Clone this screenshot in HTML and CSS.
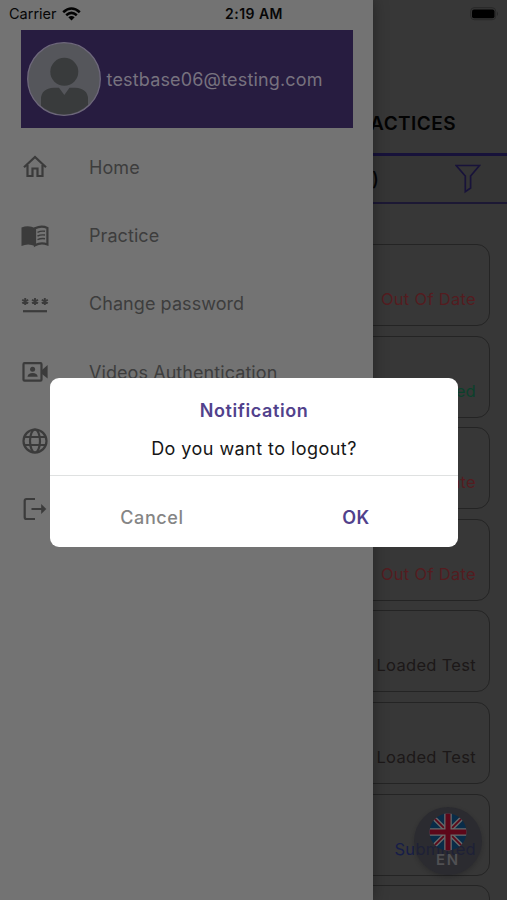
FILE: index.html
```html
<!DOCTYPE html>
<html lang="en">
<head>
<meta charset="utf-8">
<title>Practices</title>
<link rel="stylesheet" href="styles.css">
</head>
<body>
<div class="app">
  <main class="page">
    <h1 class="page-title">PRACTICES</h1>
    <div class="filter-bar">
      <span class="count">)</span>
      <svg class="funnel" width="26" height="30" viewBox="0 0 26 30"><path d="M1.2 1.5H24.5L15.6 12V24L10.3 27.6V12Z"/></svg>
    </div>
    <div class="cards">
      <div class="card late">Out Of Date</div>
      <div class="card done">Submitted</div>
      <div class="card late">Out Of Date</div>
      <div class="card late">Out Of Date</div>
      <div class="card">Loaded Test</div>
      <div class="card">Loaded Test</div>
      <div class="card sent">Submitted</div>
      <div class="card"></div>
    </div>
  </main>

  <div class="language">
    <svg width="38" height="38" viewBox="0 0 38 38">
      <defs><clipPath id="disc"><circle cx="19" cy="19" r="18.5"/></clipPath></defs>
      <g clip-path="url(#disc)">
        <path fill="#092c48" d="M0 0H38V38H0Z"/>
        <path stroke="#696969" stroke-width="4.6" d="M0 0L38 38M38 0L0 38"/>
        <path stroke="#5c0719" stroke-width="1.8" d="M0 0L38 38M38 0L0 38"/>
        <path stroke="#696969" stroke-width="7.6" d="M19 0V38M0 19H38"/>
        <path stroke="#5c0719" stroke-width="5" d="M19 0V38M0 19H38"/>
      </g>
    </svg>
    <span>EN</span>
  </div>

  <aside class="drawer">
    <div class="profile">
      <svg class="avatar" width="74" height="74" viewBox="0 0 74 74">
        <defs><clipPath id="face"><circle cx="37" cy="37" r="35.5"/></clipPath></defs>
        <circle cx="37" cy="37" r="36.3" fill="#55565b" stroke="#6e687b" stroke-width="1.3"/>
        <g clip-path="url(#face)" fill="#393b3c">
          <circle cx="37.3" cy="29.8" r="14"/>
          <path d="M14 74V57Q14 46.5 27 45.7H32L37.3 53L42.500 45.700H48Q61 46.500 61 57V74Z"/>
        </g>
      </svg>
      <span>testbase06@testing.com</span>
    </div>
    <nav class="menu">
      <div class="item">
        <svg width="28" height="28" viewBox="0 0 28 28"><path class="line" d="M3 14.200L14 4L25 14.200M6.500 12V23H11.500V15.500H16.500V23H21.500V12"/></svg>
        <span>Home</span>
      </div>
      <div class="item">
        <svg width="28" height="28" viewBox="0 0 28 28"><path class="solid" d="M.5 5.500Q7.500 2.700 14 6V24Q7 21 .5 24Z"/><path class="line" d="M14 6.300Q20.500 3.200 26.400 6V22.500Q20 20 14 23.300Z"/><path class="thin" d="M16.500 10.300Q20 8.700 24 9.300M16.500 14Q20 12.400 24 13M16.500 17.700Q20 16.100 24 16.700"/></svg>
        <span>Practice</span>
      </div>
      <div class="item">
        <svg width="28" height="28" viewBox="0 0 28 28"><path class="line" d="M2 21.200H26"/><path class="star" d="M4.200 8V15M1.200 9.700L7.200 13.300M1.200 13.300L7.200 9.700M14 8V15M11 9.700L17 13.300M11 13.300L17 9.700M23.800 8V15M20.800 9.700L26.800 13.300M20.800 13.300L26.800 9.700"/></svg>
        <span>Change password</span>
      </div>
      <div class="item">
        <svg width="28" height="28" viewBox="0 0 28 28"><rect class="line" x="2.500" y="5.200" width="18" height="17.500" rx="1"/><path class="solid" d="M21 12L26.600 7V20.500L21 16Z"/><circle class="solid" cx="11.600" cy="11.200" r="2.500"/><path class="solid" d="M6.500 18.800Q7 15.100 11.600 15.100T16.700 18.800Z"/></svg>
        <span>Videos Authentication</span>
      </div>
      <div class="item">
        <svg width="28" height="28" viewBox="0 0 28 28"><circle class="line" cx="14" cy="14" r="11.500"/><ellipse class="line" cx="14" cy="14" rx="5" ry="11.500"/><path class="line" d="M3.200 10H24.800M3.200 18H24.800"/></svg>
      </div>
      <div class="item">
        <svg width="28" height="28" viewBox="0 0 28 28"><path class="line" d="M14 4H5.500Q3.700 4 3.700 5.800V22.200Q3.700 24 5.500 24H14M10.500 14H23"/><path class="solid" d="M20.200 9L25.300 14L20.200 19Z"/></svg>
      </div>
    </nav>
  </aside>

  <header class="status">
    <span class="carrier">Carrier
      <svg width="19" height="14" viewBox="0 0 19 14"><path d="M1.200 5.200Q9.500-2.200 17.800 5.200M4.200 8.200Q9.500 3.700 14.800 8.200"/><path class="dot" d="M6.300 10.300Q9.500 7.800 12.700 10.300L9.500 13.500Z"/></svg>
    </span>
    <span class="clock">2:19 AM</span>
    <svg class="battery" width="29" height="14" viewBox="0 0 29 14"><rect class="shell" x=".7" y=".7" width="25" height="12" rx="3.500"/><rect x="2" y="2.500" width="22.500" height="8.800" rx="2"/><path class="nub" d="M27 4.500Q29 6.800 27 9Z"/></svg>
  </header>

  <section class="dialog">
    <div class="message">
      <h2>Notification</h2>
      <p>Do you want to logout?</p>
    </div>
    <div class="actions">
      <button class="cancel">Cancel</button>
      <button class="ok">OK</button>
    </div>
  </section>
</div>
</body>
</html>
```

FILE: styles.css
```css
* { box-sizing: border-box; }
body { margin: 0; font-family: Inter, "Liberation Sans", sans-serif; }
h1, h2, p { margin: 0; }
svg { display: block; flex: none; }
.app { position: relative; width: 507px; height: 900px; overflow: hidden; background: #373737; }

.page-title { padding: 111px 51px 0 0; height: 153px; text-align: right; font-size: 19px; line-height: 25px; font-weight: 600; letter-spacing: .45px; color: #030303; }
.filter-bar { display: flex; align-items: center; justify-content: flex-end; height: 51px; padding-right: 26px; border-top: 3px solid #17123a; border-bottom: 2px solid #1c1834; background: #353535; }
.count { margin-right: 76px; font-size: 19px; font-weight: 500; color: #050505; }
.funnel { fill: none; stroke: #18133a; stroke-width: 1.7; }
.cards { display: flex; flex-direction: column; gap: 9.6px; padding: 40px 17px 0; }
.card { flex: none; height: 82px; padding: 42px 13px 0 0; border: 1px solid #242424; border-radius: 13px; text-align: right; font-size: 16.5px; line-height: 25px; letter-spacing: .3px; color: #1c1818; }
.late { color: #541c20; }
.done { color: #0b412c; }
.sent { color: #161d48; }

.language { position: absolute; left: 414px; top: 807px; width: 68px; height: 68px; border-radius: 50%; display: flex; flex-direction: column; align-items: center; padding-top: 6px; background: rgba(35, 35, 43, .6); box-shadow: 0 2px 4px rgba(15, 15, 20, .25); }
.language span { margin-top: -1px; font-size: 15px; line-height: 19px; font-weight: 600; letter-spacing: 1.8px; color: #505053; }

.drawer { position: absolute; left: 0; top: 0; width: 372.5px; height: 900px; padding: 30px 19px 0 20.5px; background: #737373; box-shadow: 0 0 14px rgba(0, 0, 0, .35); }
.profile { display: flex; align-items: center; gap: 6px; width: 332.5px; height: 98px; padding-left: 6px; background: #271c40; color: #77727f; font-size: 18px; letter-spacing: .17px; }
.menu { padding-top: 5px; }
.item { display: flex; align-items: center; gap: 40px; height: 68.4px; padding-left: .5px; font-size: 18px; letter-spacing: .07px; color: #3d3d3d; }
.line { fill: none; stroke: #3b3b3b; stroke-width: 2.2; }
.thin { fill: none; stroke: #3b3b3b; stroke-width: 1.4; }
.star { fill: none; stroke: #3b3b3b; stroke-width: 1.9; }
.solid { fill: #3b3b3b; }

.status { position: absolute; left: 0; top: 0; width: 507px; height: 27px; padding: 0 8px 0 9px; display: grid; grid-template-columns: 1fr auto 1fr; align-items: center; color: #070707; font-size: 14px; }
.carrier { display: flex; align-items: center; gap: 5px; font-size: 14.500px; }
.carrier path { fill: none; stroke: #030303; stroke-width: 2.600; }
.carrier .dot { fill: #030303; stroke: none; }
.clock { font-weight: 600; letter-spacing: .45px; }
.battery { justify-self: end; fill: #000; }
.battery .shell { fill: none; stroke: #282828; }
.battery .nub { fill: #282828; }

.dialog { position: absolute; left: 50px; top: 378px; width: 408px; height: 169px; border-radius: 9px; background: #fff; overflow: hidden; text-align: center; font-size: 18px; }
.message { height: 98px; padding-top: 20px; border-bottom: 1px solid #dfe1e1; }
.message h2 { font-size: 18px; line-height: 25px; font-weight: 600; letter-spacing: .6px; color: #51418c; }
.message p { margin-top: 13px; line-height: 25px; letter-spacing: .45px; color: #161616; }
.actions { display: grid; grid-template-columns: 1fr 1fr; height: 71px; padding-top: 11px; }
.actions button { border: 0; padding: 0; background: none; font: 500 18px Inter, "Liberation Sans", sans-serif; letter-spacing: .6px; }
.actions .cancel { color: #858585; }
.actions .ok { color: #51418c; font-weight: 600; }
```
